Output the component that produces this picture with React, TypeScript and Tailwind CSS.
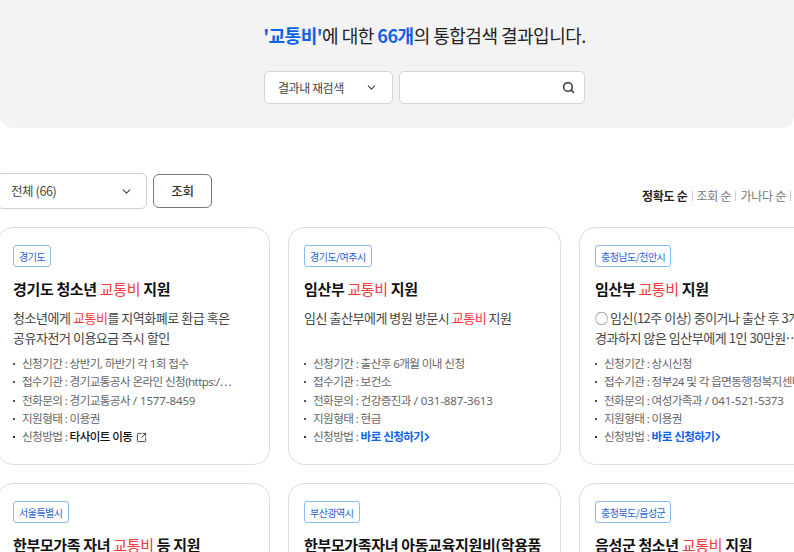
import { ChevronDown, ChevronRight, Search, SquareArrowOutUpRight } from "lucide-react";
import type { ReactNode } from "react";

const H = ({ children }: { children: ReactNode }) => <span className="font-normal text-[#f0383f]">{children}</span>;

type Card = {
    tag: string;
    title: ReactNode;
    desc?: ReactNode;
    rows?: string[];
    method?: "site" | "apply";
};

const cards: Card[] = [
    {
        tag: "경기도",
        title: <>경기도 청소년 <H>교통비</H> 지원</>,
        desc: <>청소년에게 <H>교통비</H>를 지역화폐로 환급 혹은<br />공유자전거 이용요금 즉시 할인</>,
        rows: ["신청기간 : 상반기, 하반기 각 1회 접수", "접수기관 : 경기교통공사 온라인 신청(https:/⋯", "전화문의 : 경기교통공사 / 1577-8459", "지원형태 : 이용권"],
        method: "site",
    },
    {
        tag: "경기도/여주시",
        title: <>임산부 <H>교통비</H> 지원</>,
        desc: <>임신 출산부에게 병원 방문시 <H>교통비</H> 지원</>,
        rows: ["신청기간 : 출산후 6개월 이내 신청", "접수기관 : 보건소", "전화문의 : 건강증진과 / 031-887-3613", "지원형태 : 현금"],
        method: "apply",
    },
    {
        tag: "충청남도/천안시",
        title: <>임산부 <H>교통비</H> 지원</>,
        desc: <>◯ 임신(12주 이상) 중이거나 출산 후 3개월이 지나지<br />경과하지 않은 임산부에게 1인 30만원⋯</>,
        rows: ["신청기간 : 상시신청", "접수기관 : 정부24 및 각 읍면동행정복지센터", "전화문의 : 여성가족과 / 041-521-5373", "지원형태 : 이용권"],
        method: "apply",
    },
    { tag: "서울특별시", title: <>한부모가족 자녀 <H>교통비</H> 등 지원</> },
    { tag: "부산광역시", title: <>한부모가족자녀 아동교육지원비(학용품</> },
    { tag: "충청북도/음성군", title: <>음성군 청소년 <H>교통비</H> 지원</> },
];

function ResultCard({ card }: { card: Card }) {
    return (
        <div className="h-[238px] w-[273px] shrink-0 rounded-[16px] border border-[#dedede] bg-white px-[15px] pt-[17px]">
            <span className="flex h-[22px] w-fit items-center rounded-[3px] border border-[#8cbcf5] px-[5px] text-[10px] tracking-[-0.5px] text-[#1f62d8]">
                {card.tag}
            </span>
            <div className="mt-[10px] whitespace-nowrap text-[15px] leading-[24px] font-bold tracking-[-0.35px] text-[#111]">
                {card.title}
            </div>
            {card.desc && (
                <div className="mt-[7px] h-[40px] text-[13px] leading-[20px] tracking-[-0.47px] whitespace-nowrap text-[#444]">
                    {card.desc}
                </div>
            )}
            {card.rows && (
                <ul className="mt-[7px] font-['Noto_Sans','Noto_Sans_CJK_KR',sans-serif] text-[11.6px] leading-[18.3px] tracking-[-0.6px] whitespace-nowrap text-[#666]">
                    {card.rows.map((row) => {
                        // phone numbers sit wider than the hangul around them
                        const [label, phone] = row.split(" / ");
                        return (
                            <li key={row} className="flex items-center">
                                <span className="mr-[7px] h-[2px] w-[2px] shrink-0 bg-[#555]" />
                                <span>
                                    {label}
                                    {phone && <span className="tracking-[-0.15px]"> / {phone}</span>}
                                </span>
                            </li>
                        );
                    })}
                    <li className="flex items-center">
                        <span className="mr-[7px] h-[2px] w-[2px] shrink-0 bg-[#333]" />
                        신청방법 :&nbsp;
                        {card.method === "site" ? (
                            <span className="flex items-center font-medium text-[#111]">
                                타사이트 이동
                                <SquareArrowOutUpRight className="ml-[4px] h-[11px] w-[11px] text-[#333]" strokeWidth={2} />
                            </span>
                        ) : (
                            <span className="flex items-center font-bold text-[#0f62e6]">
                                바로 신청하기
                                <ChevronRight className="-ml-[2px] h-[12px] w-[12px]" strokeWidth={3.5} />
                            </span>
                        )}
                    </li>
                </ul>
            )}
        </div>
    );
}

export default function App() {
    return (
        <div className="h-[552px] w-[794px] overflow-hidden bg-white font-['Noto_Sans_CJK_KR','Noto_Sans',sans-serif]">
            <header className="flex h-[128px] flex-col items-center rounded-b-[12px] bg-[#f3f3f3] pt-[22px] pl-[55px]">
                <h1 className="text-[18px] leading-[27px] font-normal tracking-[-0.5px] whitespace-nowrap text-[#222]">
                    <span className="font-bold text-[#0f62e6]">'교통비'</span>에 대한{" "}
                    <span className="font-bold text-[#0f62e6]">66개</span>의 통합검색 결과입니다.
                </h1>
                <div className="mt-[22px] flex gap-[6px]">
                    <div className="flex h-[33px] w-[129px] items-center justify-between rounded-[5px] border border-[#d5d5d5] bg-white pr-[14px] pl-[13px] text-[12px] tracking-[-0.45px] text-[#444]">
                        결과내 재검색
                        <ChevronDown className="h-[13px] w-[13px] text-[#444]" strokeWidth={2} />
                    </div>
                    <div className="flex h-[33px] w-[186px] items-center justify-end rounded-[5px] border border-[#d5d5d5] bg-white pr-[9px]">
                        <Search className="h-[13px] w-[13px] text-[#444]" strokeWidth={3} />
                    </div>
                </div>
            </header>

            <div className="mt-[45px] -ml-[3px] flex h-[54px] items-start justify-between pr-[3px]">
                <div className="flex gap-[6px]">
                    <div className="flex h-[36px] w-[150px] items-center justify-between rounded-[6px] border border-[#cfcfcf] bg-white pr-[13px] pl-[13px] text-[12.5px] tracking-[-0.4px] text-[#444]">
                        전체 (66)
                        <ChevronDown className="h-[13px] w-[13px] text-[#444]" strokeWidth={2} />
                    </div>
                    <div className="mt-[1px] flex h-[34px] w-[59px] items-center justify-center rounded-[6px] border border-[#777] bg-white text-[12.5px] font-medium tracking-[-0.3px] text-[#333]">
                        조회
                    </div>
                </div>
                <div className="mt-[15px] flex items-center text-[12px] leading-[16px] tracking-[-0.25px] whitespace-nowrap text-[#777]">
                    <span className="font-bold text-[#222]">정확도 순</span>
                    <span className="mx-[4px] h-[10px] w-px bg-[#ccc]" />
                    조회 순
                    <span className="mx-[4px] h-[10px] w-px bg-[#ccc]" />
                    가나다 순
                    <span className="ml-[4px] h-[10px] w-px bg-[#ccc]" />
                </div>
            </div>

            <div className="-ml-[3px] grid w-[1000px] grid-cols-[repeat(3,273px)] gap-[18px]">
                {cards.map((card) => (
                    <ResultCard key={card.tag} card={card} />
                ))}
            </div>
        </div>
    );
}
